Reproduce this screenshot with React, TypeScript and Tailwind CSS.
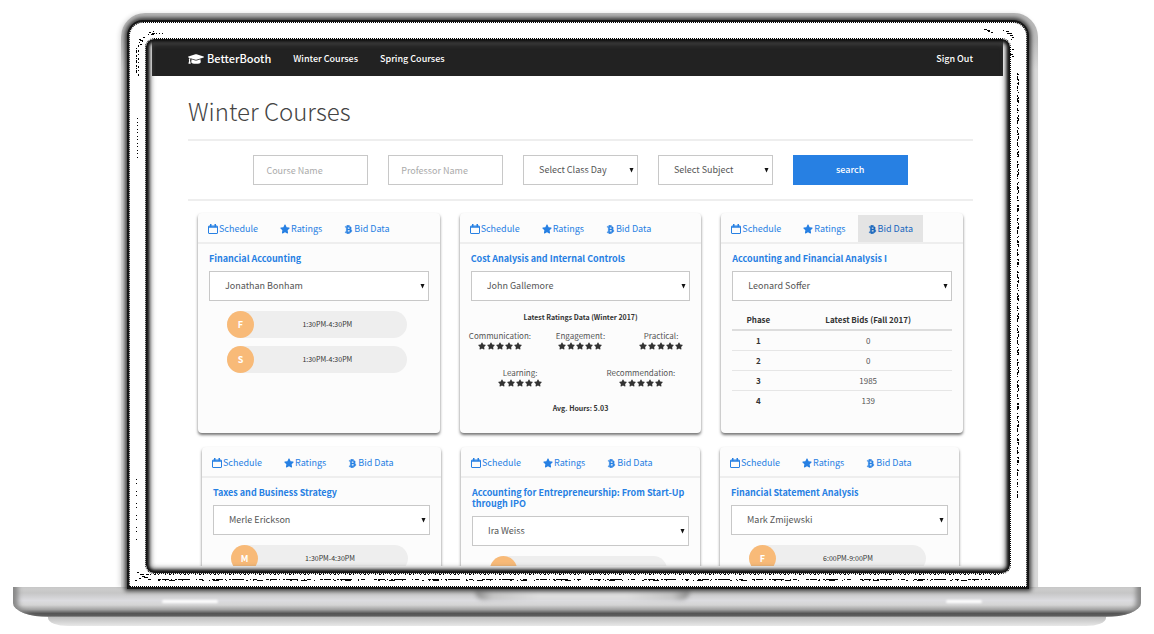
import type { ReactNode } from "react";
import { FaBtc, FaGraduationCap, FaStar } from "react-icons/fa";

type Slot = { day: string; time: string };

type Course = {
  id: string;
  title: string;
  professor: string;
  view: "schedule" | "ratings" | "bids";
  highlightBids?: boolean;
  slots?: Slot[];
};

const firstRow: Course[] = [
  {
    id: "financial-accounting",
    title: "Financial Accounting",
    professor: "Jonathan Bonham",
    view: "schedule",
    slots: [
      { day: "F", time: "1:30PM-4:30PM" },
      { day: "S", time: "1:30PM-4:30PM" },
    ],
  },
  {
    id: "cost-analysis",
    title: "Cost Analysis and Internal Controls",
    professor: "John Gallemore",
    view: "ratings",
  },
  {
    id: "accounting-analysis",
    title: "Accounting and Financial Analysis I",
    professor: "Leonard Soffer",
    view: "bids",
    highlightBids: true,
  },
];

const secondRow: Course[] = [
  {
    id: "taxes",
    title: "Taxes and Business Strategy",
    professor: "Merle Erickson",
    view: "schedule",
    slots: [{ day: "M", time: "1:30PM-4:30PM" }],
  },
  {
    id: "entrepreneurship",
    title: "Accounting for Entrepreneurship: From Start-Up through IPO",
    professor: "Ira Weiss",
    view: "schedule",
    slots: [{ day: "", time: "" }],
  },
  {
    id: "statement-analysis",
    title: "Financial Statement Analysis",
    professor: "Mark Zmijewski",
    view: "schedule",
    slots: [{ day: "F", time: "6:00PM-9:00PM" }],
  },
];

const bids = [
  { phase: 1, bid: 0 },
  { phase: 2, bid: 0 },
  { phase: 3, bid: 1985 },
  { phase: 4, bid: 139 },
];

function CalendarIcon() {
  return (
    <svg viewBox="0 0 20 20" className="size-[10px]" fill="none" stroke="currentColor" strokeWidth="2" aria-hidden="true">
      <rect x="1" y="4" width="18" height="15" rx="1" />
      <path d="M1 6h18" strokeWidth="3" />
      <path d="M5.500 0v6M14.500 0v6" strokeWidth="3" />
    </svg>
  );
}

function SelectBox({ label, value }: { label: string; value: string }) {
  return (
    <div className="relative">
      <select
        aria-label={label}
        className="block h-[30px] w-full appearance-none border border-[#c8c8c8] bg-white pr-4 pl-[15px] text-[9px] text-[#555]"
      >
        <option>{value}</option>
      </select>
      <svg viewBox="0 0 5 5" className="pointer-events-none absolute top-[13px] right-[4px] size-[5px]" aria-hidden="true">
        <path d="M0.500 0h4L2.500 4.500z" fill="#111" />
      </svg>
    </div>
  );
}

function Tab({ icon, children, active }: { icon: ReactNode; children: ReactNode; active?: boolean }) {
  return (
    <button
      type="button"
      className={
        active
          ? "flex items-center gap-px bg-[#e4e4e4] px-[10px] pt-px text-[#1967be]"
          : "flex items-center gap-px px-[10px] pt-px text-[#2780e3]"
      }
    >
      {icon}
      <span>{children}</span>
    </button>
  );
}

function Schedule({ slots }: { slots: Slot[] }) {
  return (
    <ul className="mt-[10px] mr-[22px] ml-[18px] flex flex-col gap-2">
      {slots.map((slot) => (
        <li key={slot.day} className="flex h-[27px] items-center rounded-full bg-[#eeeeee]">
          <span className="flex size-[27px] items-center justify-center rounded-full bg-[#f8ba78] text-[9px] font-bold text-white">
            {slot.day}
          </span>
          <span className="flex-1 pr-[6px] text-center text-[7px] text-[#333]">{slot.time}</span>
        </li>
      ))}
    </ul>
  );
}

function Rating({ label }: { label: string }) {
  return (
    <div className="flex flex-col items-center">
      <span className="text-[8px] leading-[13px] text-[#555]">{label}</span>
      <span className="flex gap-px text-[8px] text-[#333]" role="img" aria-label="5 stars">
        {[1, 2, 3, 4, 5].map((n) => (
          <FaStar key={n} />
        ))}
      </span>
    </div>
  );
}

function Ratings() {
  return (
    <div className="mt-[9px] text-center text-[#333]">
      <h3 className="text-[7px] leading-[14px] font-bold">Latest Ratings Data (Winter 2017)</h3>
      <div className="-mx-[11px] mt-[5px] grid grid-cols-3">
        <Rating label="Communication:" />
        <Rating label="Engagement:" />
        <Rating label="Practical:" />
      </div>
      <div className="-mx-[11px] mt-4 grid grid-cols-2">
        <Rating label="Learning:" />
        <Rating label="Recommendation:" />
      </div>
      <p className="mt-[14px] text-[7px] leading-[14px] font-bold">Avg. Hours: 5.03</p>
    </div>
  );
}

function BidTable() {
  return (
    <table className="mt-[10px] w-full text-center text-[8px] leading-[19px] text-[#555]">
      <thead className="leading-[18px] text-[#333]">
        <tr className="border-b-2 border-[#dddddd]">
          <th className="w-[52px] font-bold">Phase</th>
          <th className="font-bold">Latest Bids (Fall 2017)</th>
        </tr>
      </thead>
      <tbody>
        {bids.map((row) => (
          <tr key={row.phase} className="border-b border-[#e6e6e6] last:border-b-0">
            <th className="font-bold text-[#333]">{row.phase}</th>
            <td>{row.bid}</td>
          </tr>
        ))}
      </tbody>
    </table>
  );
}

function CourseCard({ course }: { course: Course }) {
  return (
    <article className="min-h-[220px] rounded-[4px] bg-[#fcfcfc] shadow-[0_2px_3px_rgba(0,0,0,0.55)]">
      <div className="flex h-[31px] gap-[2px] border-b-2 border-[#eeeeee] pt-[2px] text-[9px]">
        <Tab icon={<CalendarIcon />}>Schedule</Tab>
        <Tab icon={<FaStar className="size-[10px]" />}>Ratings</Tab>
        <Tab icon={<FaBtc className="size-[9px] stroke-current stroke-[20px]" />} active={course.highlightBids}>
          Bid Data
        </Tab>
      </div>
      <div className="px-[11px] pt-[9px]">
        <h2 className="mb-[7px] text-[9px] leading-[11px] font-bold text-[#2780e3]">{course.title}</h2>
        <SelectBox label={`Professor for ${course.title}`} value={course.professor} />
        {course.view === "schedule" && <Schedule slots={course.slots ?? []} />}
        {course.view === "ratings" && <Ratings />}
        {course.view === "bids" && <BidTable />}
      </div>
    </article>
  );
}

function NavBar() {
  return (
    <nav className="flex h-9 items-center bg-[#222222] pt-px pr-[30px] pl-9 text-[9px] font-medium text-white">
      <a href="#home" className="flex items-center gap-[3px] text-[11px]">
        <FaGraduationCap className="size-4" />
        BetterBooth
      </a>
      <a href="#winter" className="ml-[22px]">
        Winter Courses
      </a>
      <a href="#spring" className="ml-[22px]">
        Spring Courses
      </a>
      <a href="#signout" className="ml-auto">
        Sign Out
      </a>
    </nav>
  );
}

function CoursesPage() {
  return (
    <>
      <NavBar />
      <div className="pr-[30px] pl-9">
        <h1 className="pt-[15px] text-[24px] leading-10 font-light text-[#444]">Winter Courses</h1>
        <form
          className="mt-2 border-y-2 border-[#eeeeee] py-[14px]"
          onSubmit={(event) => event.preventDefault()}
        >
          <div className="mx-auto grid w-5/6 grid-cols-5 gap-5">
            <input
              aria-label="Course Name"
              placeholder="Course Name"
              className="h-[30px] min-w-0 border border-[#c8c8c8] px-3 text-[9px] placeholder:text-[#aaa]"
            />
            <input
              aria-label="Professor Name"
              placeholder="Professor Name"
              className="h-[30px] min-w-0 border border-[#c8c8c8] px-3 text-[9px] placeholder:text-[#aaa]"
            />
            <SelectBox label="Class day" value="Select Class Day" />
            <SelectBox label="Subject" value="Select Subject" />
            <button type="submit" className="h-[30px] bg-[#2780e3] text-[9px] font-medium text-white">
              search
            </button>
          </div>
        </form>
        <section className="mt-3 grid grid-cols-3 gap-5 px-[10px]">
          {firstRow.map((course) => (
            <CourseCard key={course.id} course={course} />
          ))}
        </section>
        <section className="mt-[14px] grid grid-cols-3 gap-5 px-[14px]">
          {secondRow.map((course) => (
            <CourseCard key={course.id} course={course} />
          ))}
        </section>
      </div>
    </>
  );
}

function BezelGrain() {
  return (
    <svg className="pointer-events-none absolute inset-0 size-full" fill="none" stroke="#000" strokeWidth="1" shapeRendering="crispEdges" aria-hidden="true">
      <path d="M19 9h2m1 1h3m-2-2h1m2 2h1m2 0h1m2 0h1M18 11h1m2 0h3M9 16h2m-1 1h3m-4 2h1m2-1h1m-3 3h2m-4 1h1M13 14h2" />
      <line x1="6" y1="25" x2="6" y2="50" strokeDasharray="1 1 3 2 2 1" />
      <line x1="8" y1="23" x2="8" y2="54" strokeDasharray="1 3 2 2" />
      <line x1="7" y1="95" x2="7" y2="136" strokeDasharray="1 3 1 2" />
      <line x1="6" y1="456" x2="6" y2="520" strokeDasharray="1 3 1 7" />
      <svg x="100%" overflow="visible">
        <path d="M-42 6h3m0 1h3m-2 1h2m1 1h2M-23 7h1m2 1h3m1 2h2m-5 0h3m0 2h3m-1 2h2m-3 2h1m-3 12h2m1-2h2m-4 5h3m-1 2h2" />
        <line x1="-9" y1="50" x2="-9" y2="475" strokeDasharray="2 1 4 3 1 2 3 1 1 4" />
        <line x1="-8" y1="51" x2="-8" y2="450" strokeDasharray="1 4 2 1 3 7" />
      </svg>
      <svg y="100%" overflow="visible">
        <path d="M7-14h2m1 2h4m-2 2h3m-6 2h2m3-1h4m-2-3h3m-1 5h3M5-6h2" />
        <line x1="28" y1="-7" x2="96%" y2="-7" strokeDasharray="3 1 7 2 1 3 2 1 12 6 1 2 4 9" />
        <line x1="28" y1="-6" x2="96%" y2="-6" strokeDasharray="2 5 1 3 6 7 1 19" />
        <line x1="20" y1="-12" x2="97%" y2="-12" strokeDasharray="1 3 2 2 1 6" />
      </svg>
    </svg>
  );
}

export default function App() {
  return (
    <main className="overflow-hidden bg-white pt-[13px] pb-2 font-['Noto_Sans_CJK_SC','Noto_Sans',sans-serif]">
      <div className="relative z-10 mr-[116px] ml-[121px] rounded-t-[24px] bg-linear-to-b from-[#b5b5b5] from-0% via-[#bdbdbd] via-5% to-[#d8d8d8] to-10% pt-[9px] pr-[11px] pl-[8px] shadow-[-2px_0_4px_rgba(0,0,0,0.12)]">
        <div className="relative rounded-t-[14px] border border-dotted border-black bg-white px-4 pt-4 pb-[13px] shadow-[0_0_0_2px_#161616,0_0_4px_4px_rgba(0,0,0,0.75)]">
          <BezelGrain />
          <div className="rounded-[8px] outline-1 outline-dotted outline-black">
            <div className="relative overflow-hidden rounded-[8px] bg-white">
              <div className="pt-px pr-[7px] pb-[7px] pl-[6px]">
                <div className="aspect-[851/526] overflow-hidden">
                  <CoursesPage />
                </div>
              </div>
              <div className="pointer-events-none absolute inset-0 rounded-[8px] shadow-[inset_0_0_3px_3px_#111,inset_0_0_5px_5px_rgba(90,90,90,0.75)]" />
            </div>
          </div>
        </div>
      </div>
      <div className="mx-[13px]">
        <div className="h-[30px] rounded-b-[36px_14px] bg-[linear-gradient(to_bottom,#cfcfcf_0%,#c6c6c6_20%,#dcdce0_45%,#d4d4d4_60%,#a3a3a3_75%,#555_88%,#5c5c5c_95%,#999_100%)] shadow-[inset_9px_0_5px_-4px_#888,inset_-9px_0_5px_-4px_#888]">
          <div className="flex items-start justify-between pr-[159px] pl-[149px]">
            <span className="mt-[13px] h-[3px] w-[56px] rounded-full bg-white blur-[1px]" />
            <span className="mt-[4px] h-[9px] w-[215px] rounded-b-[9px] bg-[linear-gradient(to_right,#888_0%,#c4c4c4_8%,#dedede_30%,#dedede_70%,#c4c4c4_92%,#888_100%)] blur-[2px]" />
            <span className="mt-[13px] h-[3px] w-[36px] rounded-full bg-white blur-[1px]" />
          </div>
        </div>
        <div className="mx-[35px] h-[9px] rounded-b-[20px_8px] bg-linear-to-b from-[#bdbdbd] to-[#e8e8e8]" />
      </div>
    </main>
  );
}
